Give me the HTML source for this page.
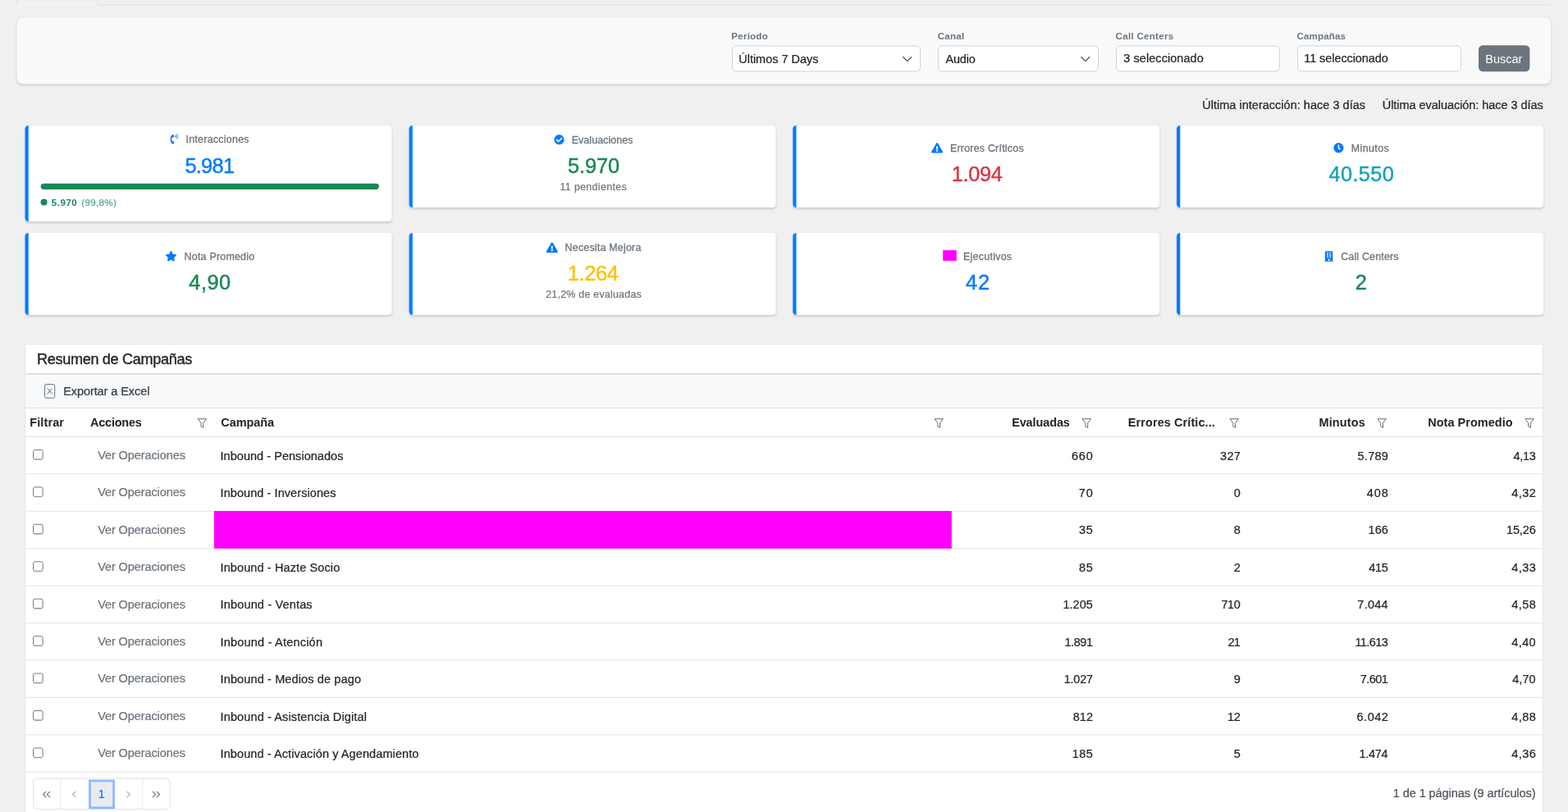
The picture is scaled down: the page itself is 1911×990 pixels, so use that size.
<!DOCTYPE html>
<html lang="es">
<head>
<meta charset="utf-8">
<title>Resumen de Campañas</title>
<style>
*{margin:0;padding:0}
html,body{width:1911px;height:990px;overflow:hidden;background:#f0f0f0}
body{position:relative;font-family:"Liberation Sans",Arial,sans-serif;font-size:14px}
.bg{position:absolute;left:0;top:0;display:block}
.txt{position:absolute;left:0;top:0;width:1911px;height:990px;will-change:transform}
.t{position:absolute;white-space:nowrap;font-family:"Liberation Sans",Arial,sans-serif;-webkit-text-stroke:.22px currentColor}
</style>
</head>
<body>
<svg class="bg" width="1911" height="990" viewBox="0 0 1911 990">
<defs><filter id="sh" x="-2%" y="-15%" width="104%" height="135%"><feGaussianBlur stdDeviation="1.7"/></filter></defs>
<rect x="118" y="4.9" width="1772.6" height="1.5" fill="#e1e4e8"/>
<rect x="20.4" y="5" width="97.8" height="1.6" fill="#f4f5f6"/>
<rect x="20.1" y="0" width="1" height="6.2" fill="#dde1e6"/>
<rect x="117.6" y="0" width="1" height="6" fill="#e0e3e7"/>
<rect x="20.65" y="21.3" width="1869.55" height="81" rx="7.5" fill="#000" fill-opacity=".16" filter="url(#sh)" transform="translate(0 1.6)"/>
<rect x="20.65" y="21.3" width="1869.55" height="81" rx="7.5" fill="#f9f9f9" stroke="#dfdfdf" stroke-width="1"/>
<rect x="20.65" y="21.3" width="1869.55" height="81" rx="7.5" fill="#f9f9f9"/>
<rect x="892.5" y="55.95" width="229" height="31" rx="4.7" fill="#fff" stroke="#ced4da" stroke-width="1"/>
<rect x="1143.5" y="55.95" width="195" height="31" rx="4.7" fill="#fff" stroke="#ced4da" stroke-width="1"/>
<rect x="1360.5" y="55.95" width="199" height="31" rx="4.7" fill="#fff" stroke="#ced4da" stroke-width="1"/>
<rect x="1581.5" y="55.95" width="199" height="31" rx="4.7" fill="#fff" stroke="#ced4da" stroke-width="1"/>
<path fill="none" stroke="#4b5158" stroke-width="1.3" stroke-linejoin="miter" d="M1100.4 69.3 L1105.75 74.4 L1111.1 69.3"/>
<path fill="none" stroke="#4b5158" stroke-width="1.3" stroke-linejoin="miter" d="M1317.45 69.3 L1322.8 74.4 L1328.15 69.3"/>
<rect x="1802" y="55.35" width="62.4" height="31.95" rx="5.2" fill="#6c757d"/>
<rect x="30.5" y="152.95" width="447" height="117.15" rx="4" fill="#000" fill-opacity=".17" filter="url(#sh)" transform="translate(0 1.7)"/>
<rect x="30.5" y="152.95" width="447" height="117.15" rx="4.2" fill="#fff"/>
<path fill="#007bff" d="M34.7 152.95 H34.7 a4.2 4.2 0 0 0 -4.2 4.2 V265.9 a4.2 4.2 0 0 0 4.2 4.2 Z"/>
<rect x="498.6" y="152.95" width="447" height="100.1" rx="4" fill="#000" fill-opacity=".17" filter="url(#sh)" transform="translate(0 1.7)"/>
<rect x="498.6" y="152.95" width="447" height="100.1" rx="4.2" fill="#fff"/>
<path fill="#007bff" d="M502.8 152.95 H502.8 a4.2 4.2 0 0 0 -4.2 4.2 V248.85 a4.2 4.2 0 0 0 4.2 4.2 Z"/>
<rect x="966.3" y="152.95" width="447" height="100.1" rx="4" fill="#000" fill-opacity=".17" filter="url(#sh)" transform="translate(0 1.7)"/>
<rect x="966.3" y="152.95" width="447" height="100.1" rx="4.2" fill="#fff"/>
<path fill="#007bff" d="M970.5 152.95 H970.5 a4.2 4.2 0 0 0 -4.2 4.2 V248.85 a4.2 4.2 0 0 0 4.2 4.2 Z"/>
<rect x="1434.1" y="152.95" width="447" height="100.1" rx="4" fill="#000" fill-opacity=".17" filter="url(#sh)" transform="translate(0 1.7)"/>
<rect x="1434.1" y="152.95" width="447" height="100.1" rx="4.2" fill="#fff"/>
<path fill="#007bff" d="M1438.3 152.95 H1438.3 a4.2 4.2 0 0 0 -4.2 4.2 V248.85 a4.2 4.2 0 0 0 4.2 4.2 Z"/>
<rect x="30.5" y="283.9" width="447" height="100" rx="4" fill="#000" fill-opacity=".17" filter="url(#sh)" transform="translate(0 1.7)"/>
<rect x="30.5" y="283.9" width="447" height="100" rx="4.2" fill="#fff"/>
<path fill="#007bff" d="M34.7 283.9 H34.7 a4.2 4.2 0 0 0 -4.2 4.2 V379.7 a4.2 4.2 0 0 0 4.2 4.2 Z"/>
<rect x="498.6" y="283.9" width="447" height="100" rx="4" fill="#000" fill-opacity=".17" filter="url(#sh)" transform="translate(0 1.7)"/>
<rect x="498.6" y="283.9" width="447" height="100" rx="4.2" fill="#fff"/>
<path fill="#007bff" d="M502.8 283.9 H502.8 a4.2 4.2 0 0 0 -4.2 4.2 V379.7 a4.2 4.2 0 0 0 4.2 4.2 Z"/>
<rect x="966.3" y="283.9" width="447" height="100" rx="4" fill="#000" fill-opacity=".17" filter="url(#sh)" transform="translate(0 1.7)"/>
<rect x="966.3" y="283.9" width="447" height="100" rx="4.2" fill="#fff"/>
<path fill="#007bff" d="M970.5 283.9 H970.5 a4.2 4.2 0 0 0 -4.2 4.2 V379.7 a4.2 4.2 0 0 0 4.2 4.2 Z"/>
<rect x="1434.1" y="283.9" width="447" height="100" rx="4" fill="#000" fill-opacity=".17" filter="url(#sh)" transform="translate(0 1.7)"/>
<rect x="1434.1" y="283.9" width="447" height="100" rx="4.2" fill="#fff"/>
<path fill="#007bff" d="M1438.3 283.9 H1438.3 a4.2 4.2 0 0 0 -4.2 4.2 V379.7 a4.2 4.2 0 0 0 4.2 4.2 Z"/>
<rect x="49.7" y="223.7" width="412.2" height="7.3" rx="3.65" fill="#198754"/>
<circle cx="53.5" cy="246.4" r="4" fill="#198754"/>
<path transform="translate(207.6 163.2) scale(0.02441)" fill="#007bff" d="M97.333 506.966c-129.874-129.874-129.681-340.252 0-469.933 5.698-5.698 14.527-6.632 21.263-2.422l64.817 40.513a17.187 17.187 0 0 1 6.849 20.958l-32.408 81.021a17.188 17.188 0 0 1-17.669 10.719l-55.81-5.58c-21.051 58.261-20.612 122.471 0 179.515l55.811-5.581a17.188 17.188 0 0 1 17.669 10.719l32.408 81.022a17.188 17.188 0 0 1-6.849 20.958l-64.817 40.513a17.19 17.19 0 0 1-21.264-2.422zM247.126 95.473c11.832 20.047 11.832 45.008 0 65.055-3.95 6.693-13.108 7.959-18.718 2.581l-5.975-5.726c-3.911-3.748-4.793-9.622-2.261-14.41a32.063 32.063 0 0 0 0-29.945c-2.533-4.788-1.65-10.662 2.261-14.41l5.975-5.726c5.61-5.378 14.768-4.112 18.718 2.581zm91.787-91.187c60.14 71.604 60.092 175.882 0 247.428-4.474 5.327-12.53 5.746-17.552.933l-5.798-5.557c-4.56-4.371-4.977-11.529-.93-16.379 49.687-59.538 49.646-145.933 0-205.422-4.047-4.85-3.631-12.008.93-16.379l5.798-5.557c5.022-4.813 13.078-4.394 17.552.933zm-45.972 44.941c36.05 46.322 36.108 111.149 0 157.546-4.39 5.641-12.697 6.251-17.856 1.304l-5.818-5.579c-4.4-4.219-4.998-11.095-1.285-15.931 26.536-34.564 26.534-82.572 0-117.134-3.713-4.836-3.115-11.711 1.285-15.931l5.818-5.579c5.159-4.947 13.466-4.337 17.856 1.304z"/>
<path transform="translate(675.3 164) scale(0.02441)" fill="#007bff" d="M504 256c0 136.967-111.033 248-248 248S8 392.967 8 256 119.033 8 256 8s248 111.033 248 248zM227.314 387.314l184-184c6.248-6.248 6.248-16.379 0-22.627l-22.627-22.627c-6.248-6.249-16.379-6.249-22.628 0L216 308.118l-70.059-70.059c-6.248-6.248-16.379-6.248-22.628 0l-22.627 22.627c-6.248 6.248-6.248 16.379 0 22.627l104 104c6.249 6.249 16.379 6.249 22.628.001z"/>
<path transform="translate(1135 174.1) scale(0.02441)" fill="#007bff" d="M569.517 440.013C587.975 472.007 564.806 512 527.94 512H48.054c-36.937 0-59.999-40.055-41.577-71.987L246.423 23.985c18.467-32.009 64.72-31.951 83.154 0l239.94 416.028zM288 354c-25.405 0-46 20.595-46 46s20.595 46 46 46 46-20.595 46-46-20.595-46-46-46zm-43.673-165.346l7.418 136c.347 6.364 5.609 11.346 11.982 11.346h48.546c6.373 0 11.635-4.982 11.982-11.346l7.418-136c.375-6.874-5.098-12.654-11.982-12.654h-63.383c-6.884 0-12.356 5.78-11.981 12.654z"/>
<path transform="translate(1625.2 174) scale(0.02441)" fill="#007bff" d="M256,8C119,8,8,119,8,256S119,504,256,504,504,393,504,256,393,8,256,8Zm92.49,313h0l-20,25a16,16,0,0,1-22.49,2.5h0l-67-49.72a40,40,0,0,1-15-31.23V112a16,16,0,0,1,16-16h32a16,16,0,0,1,16,16V256l58,42.5A16,16,0,0,1,348.49,321Z"/>
<path transform="translate(201.4 306) scale(0.02441)" fill="#007bff" d="M259.3 17.8L194 150.2 47.9 171.5c-26.2 3.8-36.7 36.1-17.7 54.6l105.7 103-25 145.5c-4.5 26.3 23.2 46 46.4 33.7L288 439.6l130.7 68.7c23.2 12.2 50.9-7.4 46.4-33.7l-25-145.5 105.7-103c19-18.5 8.5-50.8-17.7-54.6L382 150.2 316.7 17.8c-11.7-23.6-45.6-23.9-57.4 0z"/>
<path transform="translate(665.8 295.4) scale(0.02441)" fill="#007bff" d="M569.517 440.013C587.975 472.007 564.806 512 527.94 512H48.054c-36.937 0-59.999-40.055-41.577-71.987L246.423 23.985c18.467-32.009 64.72-31.951 83.154 0l239.94 416.028zM288 354c-25.405 0-46 20.595-46 46s20.595 46 46 46 46-20.595 46-46-20.595-46-46-46zm-43.673-165.346l7.418 136c.347 6.364 5.609 11.346 11.982 11.346h48.546c6.373 0 11.635-4.982 11.982-11.346l7.418-136c.375-6.874-5.098-12.654-11.982-12.654h-63.383c-6.884 0-12.356 5.78-11.981 12.654z"/>
<rect x="1149.2" y="305.1" width="16.6" height="12.8" fill="#ff00ff"/>
<path transform="translate(1614.1 306.2) scale(0.02441)" fill="#007bff" d="M436 480h-20V24c0-13.255-10.745-24-24-24H56C42.745 0 32 10.745 32 24v456H12c-6.627 0-12 5.373-12 12v20h448v-20c0-6.627-5.373-12-12-12zM128 76c0-6.627 5.373-12 12-12h40c6.627 0 12 5.373 12 12v40c0 6.627-5.373 12-12 12h-40c-6.627 0-12-5.373-12-12V76zm0 96c0-6.627 5.373-12 12-12h40c6.627 0 12 5.373 12 12v40c0 6.627-5.373 12-12 12h-40c-6.627 0-12-5.373-12-12v-40zm52 148h-40c-6.627 0-12-5.373-12-12v-40c0-6.627 5.373-12 12-12h40c6.627 0 12 5.373 12 12v40c0 6.627-5.373 12-12 12zm76 160h-64v-84c0-6.627 5.373-12 12-12h40c6.627 0 12 5.373 12 12v84zm64-172c0 6.627-5.373 12-12 12h-40c-6.627 0-12-5.373-12-12v-40c0-6.627 5.373-12 12-12h40c6.627 0 12 5.373 12 12v40zm0-96c0 6.627-5.373 12-12 12h-40c-6.627 0-12-5.373-12-12v-40c0-6.627 5.373-12 12-12h40c6.627 0 12 5.373 12 12v40zm0-96c0 6.627-5.373 12-12 12h-40c-6.627 0-12-5.373-12-12V76c0-6.627 5.373-12 12-12h40c6.627 0 12 5.373 12 12v40z"/>
<rect x="30.4" y="419.3" width="1850.2" height="580" fill="#e2e6ec"/>
<rect x="31.4" y="420.3" width="1848.2" height="580" fill="#fff"/>
<rect x="31.4" y="454.9" width="1848.2" height="2.1" fill="#dee2e6"/>
<rect x="31.4" y="457" width="1848.2" height="40.1" fill="#f8f9fa"/>
<rect x="31.4" y="497" width="1848.2" height="1" fill="#dee2e6"/>
<rect x="31.4" y="531.9" width="1848.2" height="1" fill="#dee2e6"/>
<rect x="31.4" y="577.33" width="1848.2" height="1" fill="#e1e4e8"/>
<rect x="31.4" y="622.76" width="1848.2" height="1" fill="#e1e4e8"/>
<rect x="31.4" y="668.19" width="1848.2" height="1" fill="#e1e4e8"/>
<rect x="31.4" y="713.62" width="1848.2" height="1" fill="#e1e4e8"/>
<rect x="31.4" y="759.05" width="1848.2" height="1" fill="#e1e4e8"/>
<rect x="31.4" y="804.48" width="1848.2" height="1" fill="#e1e4e8"/>
<rect x="31.4" y="849.91" width="1848.2" height="1" fill="#e1e4e8"/>
<rect x="31.4" y="895.34" width="1848.2" height="1" fill="#e1e4e8"/>
<rect x="31.4" y="940.77" width="1848.2" height="1" fill="#e1e4e8"/>
<rect x="260.9" y="623" width="898.9" height="45.8" fill="#ff00ff"/>
<rect x="54.55" y="468.55" width="12.1" height="16.7" rx="1.8" fill="none" stroke="#5d656d" stroke-width="0.9"/>
<path d="M57.7 473.7 L63.5 480.3 M63.5 473.7 L57.7 480.3" stroke="#5d656d" stroke-width="1" fill="none"/>
<path transform="translate(240.5 510.1)" d="M0.7 0.6 H11.1 L7.3 5.5 V11.3 L4.5 9.7 V5.5 Z" fill="none" stroke="#4a5057" stroke-width="0.85" stroke-linejoin="round"/>
<path transform="translate(1138.3 510.1)" d="M0.7 0.6 H11.1 L7.3 5.5 V11.3 L4.5 9.7 V5.5 Z" fill="none" stroke="#4a5057" stroke-width="0.85" stroke-linejoin="round"/>
<path transform="translate(1318.4 510.1)" d="M0.7 0.6 H11.1 L7.3 5.5 V11.3 L4.5 9.7 V5.5 Z" fill="none" stroke="#4a5057" stroke-width="0.85" stroke-linejoin="round"/>
<path transform="translate(1498.3 510.1)" d="M0.7 0.6 H11.1 L7.3 5.5 V11.3 L4.5 9.7 V5.5 Z" fill="none" stroke="#4a5057" stroke-width="0.85" stroke-linejoin="round"/>
<path transform="translate(1678.2 510.1)" d="M0.7 0.6 H11.1 L7.3 5.5 V11.3 L4.5 9.7 V5.5 Z" fill="none" stroke="#4a5057" stroke-width="0.85" stroke-linejoin="round"/>
<path transform="translate(1858.1 510.1)" d="M0.7 0.6 H11.1 L7.3 5.5 V11.3 L4.5 9.7 V5.5 Z" fill="none" stroke="#4a5057" stroke-width="0.85" stroke-linejoin="round"/>
<rect x="40.6" y="548.5" width="11.5" height="11.5" rx="1.9" fill="#fff" stroke="#767676" stroke-width="1"/>
<path d="M42 560.3 H50.7" stroke="#9a9a9a" stroke-width="0.8" fill="none"/>
<rect x="40.6" y="593.93" width="11.5" height="11.5" rx="1.9" fill="#fff" stroke="#767676" stroke-width="1"/>
<path d="M42 605.73 H50.7" stroke="#9a9a9a" stroke-width="0.8" fill="none"/>
<rect x="40.6" y="639.36" width="11.5" height="11.5" rx="1.9" fill="#fff" stroke="#767676" stroke-width="1"/>
<path d="M42 651.16 H50.7" stroke="#9a9a9a" stroke-width="0.8" fill="none"/>
<rect x="40.6" y="684.79" width="11.5" height="11.5" rx="1.9" fill="#fff" stroke="#767676" stroke-width="1"/>
<path d="M42 696.59 H50.7" stroke="#9a9a9a" stroke-width="0.8" fill="none"/>
<rect x="40.6" y="730.22" width="11.5" height="11.5" rx="1.9" fill="#fff" stroke="#767676" stroke-width="1"/>
<path d="M42 742.02 H50.7" stroke="#9a9a9a" stroke-width="0.8" fill="none"/>
<rect x="40.6" y="775.65" width="11.5" height="11.5" rx="1.9" fill="#fff" stroke="#767676" stroke-width="1"/>
<path d="M42 787.45 H50.7" stroke="#9a9a9a" stroke-width="0.8" fill="none"/>
<rect x="40.6" y="821.08" width="11.5" height="11.5" rx="1.9" fill="#fff" stroke="#767676" stroke-width="1"/>
<path d="M42 832.88 H50.7" stroke="#9a9a9a" stroke-width="0.8" fill="none"/>
<rect x="40.6" y="866.51" width="11.5" height="11.5" rx="1.9" fill="#fff" stroke="#767676" stroke-width="1"/>
<path d="M42 878.31 H50.7" stroke="#9a9a9a" stroke-width="0.8" fill="none"/>
<rect x="40.6" y="911.94" width="11.5" height="11.5" rx="1.9" fill="#fff" stroke="#767676" stroke-width="1"/>
<path d="M42 923.74 H50.7" stroke="#9a9a9a" stroke-width="0.8" fill="none"/>
<rect x="40.7" y="949.1" width="166.4" height="37.5" rx="4" fill="#fff" stroke="#dee2e6" stroke-width="1"/>
<rect x="73.3" y="949.2" width="1" height="37.4" fill="#e3e6ea"/>
<rect x="173.3" y="949.2" width="1" height="37.4" fill="#e3e6ea"/>
<rect x="108.1" y="950.6" width="31.8" height="35.6" fill="#8bb9fe"/>
<rect x="110.9" y="953.3" width="26.3" height="30.2" fill="#e9ecef"/>
<path fill="none" stroke="#6f777f" stroke-width="1.15" stroke-linejoin="miter" d="M56.25 964.95 L52.55 968.5 L56.25 972.05 M61.05 964.95 L57.35 968.5 L61.05 972.05"/>
<path fill="none" stroke="#6f777f" stroke-width="1.15" stroke-linejoin="miter" stroke-opacity=".6" d="M92.25 964.95 L88.55 968.5 L92.25 972.05"/>
<path fill="none" stroke="#6f777f" stroke-width="1.15" stroke-linejoin="miter" stroke-opacity=".6" d="M154.65 964.95 L158.35 968.5 L154.65 972.05"/>
<path fill="none" stroke="#6f777f" stroke-width="1.15" stroke-linejoin="miter" d="M186.05 964.95 L189.75 968.5 L186.05 972.05 M190.85 964.95 L194.55 968.5 L190.85 972.05"/>
</svg>
<div class="txt">
<span class="t" style="left:891.32px;top:38px;font-size:11.59px;line-height:12px;letter-spacing:0.221px;color:#6c757d;font-weight:700;-webkit-text-stroke:0;">Período</span>
<span class="t" style="left:1142.72px;top:38px;font-size:11.59px;line-height:12px;letter-spacing:0.242px;color:#6c757d;font-weight:700;-webkit-text-stroke:0;">Canal</span>
<span class="t" style="left:1359.62px;top:38px;font-size:11.59px;line-height:12px;letter-spacing:0.272px;color:#6c757d;font-weight:700;-webkit-text-stroke:0;">Call Centers</span>
<span class="t" style="left:1580.62px;top:38px;font-size:11.59px;line-height:12px;letter-spacing:0.099px;color:#6c757d;font-weight:700;-webkit-text-stroke:0;">Campañas</span>
<span class="t" style="left:900.23px;top:64px;font-size:14.49px;line-height:16px;letter-spacing:-0.007px;color:#212529;">Últimos 7 Days</span>
<span class="t" style="left:1152.47px;top:64px;font-size:14.49px;line-height:16px;letter-spacing:-0.177px;color:#212529;">Audio</span>
<span class="t" style="left:1369.35px;top:63px;font-size:14.49px;line-height:16px;letter-spacing:0.056px;color:#212529;">3 seleccionado</span>
<span class="t" style="left:1589.30px;top:63px;font-size:14.49px;line-height:16px;letter-spacing:-0.078px;color:#212529;">11 seleccionado</span>
<span class="t" style="left:1810.31px;top:64px;font-size:14.49px;line-height:16px;letter-spacing:0.010px;color:#fff;-webkit-text-stroke:0;">Buscar</span>
<span class="t" style="left:1465.18px;top:120px;font-size:14.49px;line-height:16px;letter-spacing:0.026px;color:#212529;">Última interacción: hace 3 días</span>
<span class="t" style="left:1684.78px;top:120px;font-size:14.49px;line-height:16px;letter-spacing:-0.045px;color:#212529;">Última evaluación: hace 3 días</span>
<span class="t" style="left:226.45px;top:163px;font-size:12.42px;line-height:14px;letter-spacing:0.275px;color:#6c757d;-webkit-text-stroke:0.3px #6c757d;">Interacciones</span>
<span class="t" style="left:696.68px;top:164px;font-size:12.42px;line-height:14px;letter-spacing:0.097px;color:#6c757d;-webkit-text-stroke:0.3px #6c757d;">Evaluaciones</span>
<span class="t" style="left:1157.88px;top:174px;font-size:12.42px;line-height:14px;letter-spacing:0.240px;color:#6c757d;-webkit-text-stroke:0.3px #6c757d;">Errores Críticos</span>
<span class="t" style="left:1646.68px;top:174px;font-size:12.42px;line-height:14px;letter-spacing:0.438px;color:#6c757d;-webkit-text-stroke:0.3px #6c757d;">Minutos</span>
<span class="t" style="left:224.58px;top:306px;font-size:12.42px;line-height:14px;letter-spacing:0.233px;color:#6c757d;-webkit-text-stroke:0.3px #6c757d;">Nota Promedio</span>
<span class="t" style="left:688.58px;top:295px;font-size:12.42px;line-height:14px;letter-spacing:0.220px;color:#6c757d;-webkit-text-stroke:0.3px #6c757d;">Necesita Mejora</span>
<span class="t" style="left:1173.98px;top:306px;font-size:12.42px;line-height:14px;letter-spacing:0.281px;color:#6c757d;-webkit-text-stroke:0.3px #6c757d;">Ejecutivos</span>
<span class="t" style="left:1634.17px;top:306px;font-size:12.42px;line-height:14px;letter-spacing:0.193px;color:#6c757d;-webkit-text-stroke:0.3px #6c757d;">Call Centers</span>
<span class="t" style="left:225.38px;top:188px;font-size:25.36px;line-height:28px;letter-spacing:-0.700px;color:#007bff;-webkit-text-stroke:0.45px #007bff;">5.981</span>
<span class="t" style="left:692.08px;top:188px;font-size:25.36px;line-height:28px;letter-spacing:-0.089px;color:#198754;-webkit-text-stroke:0.45px #198754;">5.970</span>
<span class="t" style="left:1159.77px;top:198px;font-size:25.36px;line-height:28px;letter-spacing:-0.346px;color:#dc3545;-webkit-text-stroke:0.45px #dc3545;">1.094</span>
<span class="t" style="left:1619.42px;top:198px;font-size:25.36px;line-height:28px;letter-spacing:0.382px;color:#17a2b8;-webkit-text-stroke:0.45px #17a2b8;">40.550</span>
<span class="t" style="left:230.32px;top:330px;font-size:25.36px;line-height:28px;letter-spacing:0.472px;color:#198754;-webkit-text-stroke:0.45px #198754;">4,90</span>
<span class="t" style="left:691.67px;top:319px;font-size:25.36px;line-height:28px;letter-spacing:-0.296px;color:#ffc107;-webkit-text-stroke:0.45px #ffc107;">1.264</span>
<span class="t" style="left:1176.92px;top:330px;font-size:25.36px;line-height:28px;letter-spacing:0.900px;color:#007bff;-webkit-text-stroke:0.45px #007bff;">42</span>
<span class="t" style="left:1651.72px;top:330px;font-size:25.36px;line-height:28px;letter-spacing:0.647px;color:#198754;-webkit-text-stroke:0.45px #198754;">2</span>
<span class="t" style="left:682.55px;top:221px;font-size:12.42px;line-height:14px;letter-spacing:0.339px;color:#6c757d;">11 pendientes</span>
<span class="t" style="left:665.18px;top:352px;font-size:12.42px;line-height:14px;letter-spacing:0.244px;color:#6c757d;">21,2% de evaluadas</span>
<span class="t" style="left:62.84px;top:241px;font-size:11.59px;line-height:12px;letter-spacing:0.490px;color:#198754;font-weight:700;-webkit-text-stroke:0;">5.970</span>
<span class="t" style="left:99.28px;top:241px;font-size:11.59px;line-height:12px;letter-spacing:0.333px;color:#55a581;">(99,8%)</span>
<span class="t" style="left:44.91px;top:428px;font-size:18.11px;line-height:20px;letter-spacing:-0.325px;color:#212529;-webkit-text-stroke:0.36px #212529;">Resumen de Campañas</span>
<span class="t" style="left:77.21px;top:469px;font-size:14.49px;line-height:16px;letter-spacing:-0.074px;color:#343a40;">Exportar a Excel</span>
<span class="t" style="left:36.23px;top:507px;font-size:14.49px;line-height:16px;letter-spacing:0.123px;color:#212529;font-weight:700;-webkit-text-stroke:0;">Filtrar</span>
<span class="t" style="left:110.04px;top:507px;font-size:14.49px;line-height:16px;letter-spacing:-0.235px;color:#212529;font-weight:700;-webkit-text-stroke:0;">Acciones</span>
<span class="t" style="left:269.31px;top:507px;font-size:14.49px;line-height:16px;letter-spacing:-0.066px;color:#212529;font-weight:700;-webkit-text-stroke:0;">Campaña</span>
<span class="t" style="left:1233.13px;top:507px;font-size:14.49px;line-height:16px;letter-spacing:-0.112px;color:#212529;font-weight:700;-webkit-text-stroke:0;">Evaluadas</span>
<span class="t" style="left:1374.83px;top:507px;font-size:14.49px;line-height:16px;letter-spacing:0.082px;color:#212529;font-weight:700;-webkit-text-stroke:0;">Errores Crític...</span>
<span class="t" style="left:1607.43px;top:507px;font-size:14.49px;line-height:16px;letter-spacing:0.142px;color:#212529;font-weight:700;-webkit-text-stroke:0;">Minutos</span>
<span class="t" style="left:1740.23px;top:507px;font-size:14.49px;line-height:16px;letter-spacing:0.035px;color:#212529;font-weight:700;-webkit-text-stroke:0;">Nota Promedio</span>
<span class="t" style="left:119.14px;top:547px;font-size:14.49px;line-height:16px;letter-spacing:-0.079px;color:#6c757d;">Ver Operaciones</span>
<span class="t" style="left:268.56px;top:548px;font-size:14.49px;line-height:16px;letter-spacing:0.044px;color:#212529;">Inbound - Pensionados</span>
<span class="t" style="left:1305.90px;top:548px;font-size:14.49px;line-height:16px;letter-spacing:0.900px;color:#212529;">660</span>
<span class="t" style="left:1486.95px;top:548px;font-size:14.49px;line-height:16px;letter-spacing:0.407px;color:#212529;">327</span>
<span class="t" style="left:1654.52px;top:548px;font-size:14.49px;line-height:16px;letter-spacing:0.280px;color:#212529;">5.789</span>
<span class="t" style="left:1844.47px;top:548px;font-size:14.49px;line-height:16px;letter-spacing:-0.307px;color:#212529;">4,13</span>
<span class="t" style="left:119.14px;top:592px;font-size:14.49px;line-height:16px;letter-spacing:-0.079px;color:#6c757d;">Ver Operaciones</span>
<span class="t" style="left:268.56px;top:593px;font-size:14.49px;line-height:16px;letter-spacing:0.078px;color:#212529;">Inbound - Inversiones</span>
<span class="t" style="left:1314.86px;top:593px;font-size:14.49px;line-height:16px;letter-spacing:0.898px;color:#212529;">70</span>
<span class="t" style="left:1503.71px;top:593px;font-size:14.49px;line-height:16px;letter-spacing:0.250px;color:#212529;">0</span>
<span class="t" style="left:1665.86px;top:593px;font-size:14.49px;line-height:16px;letter-spacing:0.900px;color:#212529;">408</span>
<span class="t" style="left:1842.37px;top:593px;font-size:14.49px;line-height:16px;letter-spacing:0.423px;color:#212529;">4,32</span>
<span class="t" style="left:119.14px;top:638px;font-size:14.49px;line-height:16px;letter-spacing:-0.079px;color:#6c757d;">Ver Operaciones</span>
<span class="t" style="left:1314.90px;top:638px;font-size:14.49px;line-height:16px;letter-spacing:0.900px;color:#212529;">35</span>
<span class="t" style="left:1503.77px;top:638px;font-size:14.49px;line-height:16px;letter-spacing:0.250px;color:#212529;">8</span>
<span class="t" style="left:1667.60px;top:638px;font-size:14.49px;line-height:16px;letter-spacing:0.037px;color:#212529;">166</span>
<span class="t" style="left:1836.00px;top:638px;font-size:14.49px;line-height:16px;letter-spacing:-0.126px;color:#212529;">15,26</span>
<span class="t" style="left:119.14px;top:683px;font-size:14.49px;line-height:16px;letter-spacing:-0.079px;color:#6c757d;">Ver Operaciones</span>
<span class="t" style="left:268.56px;top:684px;font-size:14.49px;line-height:16px;letter-spacing:0.116px;color:#212529;">Inbound - Hazte Socio</span>
<span class="t" style="left:1314.90px;top:684px;font-size:14.49px;line-height:16px;letter-spacing:0.900px;color:#212529;">85</span>
<span class="t" style="left:1503.87px;top:684px;font-size:14.49px;line-height:16px;letter-spacing:0.250px;color:#212529;">2</span>
<span class="t" style="left:1668.37px;top:684px;font-size:14.49px;line-height:16px;letter-spacing:-0.363px;color:#212529;">415</span>
<span class="t" style="left:1842.37px;top:684px;font-size:14.49px;line-height:16px;letter-spacing:0.393px;color:#212529;">4,33</span>
<span class="t" style="left:119.14px;top:729px;font-size:14.49px;line-height:16px;letter-spacing:-0.079px;color:#6c757d;">Ver Operaciones</span>
<span class="t" style="left:268.56px;top:729px;font-size:14.49px;line-height:16px;letter-spacing:0.169px;color:#212529;">Inbound - Ventas</span>
<span class="t" style="left:1295.40px;top:729px;font-size:14.49px;line-height:16px;letter-spacing:0.066px;color:#212529;">1.205</span>
<span class="t" style="left:1488.46px;top:729px;font-size:14.49px;line-height:16px;letter-spacing:-0.429px;color:#212529;">710</span>
<span class="t" style="left:1654.36px;top:729px;font-size:14.49px;line-height:16px;letter-spacing:0.255px;color:#212529;">7.044</span>
<span class="t" style="left:1842.37px;top:729px;font-size:14.49px;line-height:16px;letter-spacing:0.390px;color:#212529;">4,58</span>
<span class="t" style="left:119.14px;top:774px;font-size:14.49px;line-height:16px;letter-spacing:-0.079px;color:#6c757d;">Ver Operaciones</span>
<span class="t" style="left:268.56px;top:775px;font-size:14.49px;line-height:16px;letter-spacing:0.211px;color:#212529;">Inbound - Atención</span>
<span class="t" style="left:1297.50px;top:775px;font-size:14.49px;line-height:16px;letter-spacing:-0.434px;color:#212529;">1.891</span>
<span class="t" style="left:1496.50px;top:775px;font-size:14.49px;line-height:16px;letter-spacing:-0.700px;color:#212529;">21</span>
<span class="t" style="left:1651.40px;top:775px;font-size:14.49px;line-height:16px;letter-spacing:-0.557px;color:#212529;">11.613</span>
<span class="t" style="left:1842.37px;top:775px;font-size:14.49px;line-height:16px;letter-spacing:0.369px;color:#212529;">4,40</span>
<span class="t" style="left:119.14px;top:819px;font-size:14.49px;line-height:16px;letter-spacing:-0.079px;color:#6c757d;">Ver Operaciones</span>
<span class="t" style="left:268.56px;top:820px;font-size:14.49px;line-height:16px;letter-spacing:0.137px;color:#212529;">Inbound - Medios de pago</span>
<span class="t" style="left:1296.70px;top:820px;font-size:14.49px;line-height:16px;letter-spacing:-0.228px;color:#212529;">1.027</span>
<span class="t" style="left:1503.83px;top:820px;font-size:14.49px;line-height:16px;letter-spacing:0.250px;color:#212529;">9</span>
<span class="t" style="left:1657.76px;top:820px;font-size:14.49px;line-height:16px;letter-spacing:-0.524px;color:#212529;">7.601</span>
<span class="t" style="left:1843.17px;top:820px;font-size:14.49px;line-height:16px;letter-spacing:0.103px;color:#212529;">4,70</span>
<span class="t" style="left:119.14px;top:865px;font-size:14.49px;line-height:16px;letter-spacing:-0.079px;color:#6c757d;">Ver Operaciones</span>
<span class="t" style="left:268.56px;top:866px;font-size:14.49px;line-height:16px;letter-spacing:0.133px;color:#212529;">Inbound - Asistencia Digital</span>
<span class="t" style="left:1307.77px;top:866px;font-size:14.49px;line-height:16px;letter-spacing:0.046px;color:#212529;">812</span>
<span class="t" style="left:1496.10px;top:866px;font-size:14.49px;line-height:16px;letter-spacing:-0.279px;color:#212529;">12</span>
<span class="t" style="left:1653.46px;top:866px;font-size:14.49px;line-height:16px;letter-spacing:0.555px;color:#212529;">6.042</span>
<span class="t" style="left:1842.37px;top:866px;font-size:14.49px;line-height:16px;letter-spacing:0.390px;color:#212529;">4,88</span>
<span class="t" style="left:119.14px;top:910px;font-size:14.49px;line-height:16px;letter-spacing:-0.079px;color:#6c757d;">Ver Operaciones</span>
<span class="t" style="left:268.56px;top:911px;font-size:14.49px;line-height:16px;letter-spacing:0.103px;color:#212529;">Inbound - Activación y Agendamiento</span>
<span class="t" style="left:1306.80px;top:911px;font-size:14.49px;line-height:16px;letter-spacing:0.473px;color:#212529;">185</span>
<span class="t" style="left:1503.75px;top:911px;font-size:14.49px;line-height:16px;letter-spacing:0.250px;color:#212529;">5</span>
<span class="t" style="left:1656.50px;top:911px;font-size:14.49px;line-height:16px;letter-spacing:-0.280px;color:#212529;">1.474</span>
<span class="t" style="left:1842.37px;top:911px;font-size:14.49px;line-height:16px;letter-spacing:0.393px;color:#212529;">4,36</span>
<span class="t" style="left:1697.80px;top:959px;font-size:14.49px;line-height:16px;letter-spacing:-0.067px;color:#495057;">1 de 1 páginas (9 artículos)</span>
<span class="t" style="left:119.67px;top:960px;font-size:14.49px;line-height:16px;letter-spacing:0.000px;color:#007bff;">1</span>
</div>
</body>
</html>
